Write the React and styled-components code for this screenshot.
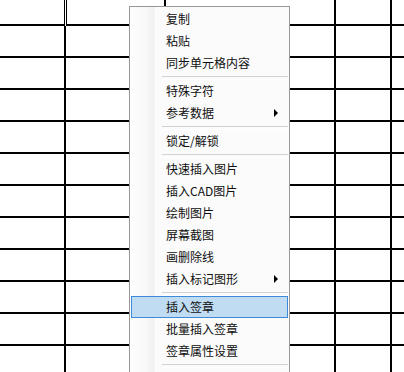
import React from 'react'
import styled, { createGlobalStyle } from 'styled-components'

const GlobalStyle = createGlobalStyle`
  html, body {
    margin: 0;
    padding: 0;
    background: #fff;
  }
  * {
    box-sizing: border-box;
  }
`;

const Page = styled.div`
  position: relative;
  width: 404px;
  height: 372px;
  overflow: hidden;
  background: #fff;
`;

const Sheet = styled.div`
  display: grid;
  grid-template-columns: 66px 100px 170px 56px 1fr;
  grid-template-rows: 26px repeat(11, 32px);
`;

const Cell = styled.div`
  position: relative;
  border-bottom: 2px solid #000;
  border-right: ${p => (p.$last ? 'none' : '2px solid #000')};
  background: #fff;

  ${p => p.$selected && `
    &::after {
      content: '';
      position: absolute;
      left: -2px;
      top: -3px;
      width: 103px;
      height: 30px;
      border: 1px solid #000;
      box-shadow: inset 0 0 0 1px #fff, inset 0 0 0 2px #000;
    }
  `}
`;

const Menu = styled.div`
  position: absolute;
  left: 129px;
  top: 6px;
  width: 161px;
  padding: 1px 0 20px;
  border: 1px solid #979797;
  background: linear-gradient(to right, #fdfdfd 0, #f8f8f8 16px, #efefef 24px, #fbfbfb 25px, #fbfbfb 100%);
  font-family: "Noto Sans CJK SC", "Noto Sans", sans-serif;
  font-size: 12px;
  color: #0f0f0f;
`;

const Item = styled.div`
  display: flex;
  align-items: center;
  height: 22px;
  line-height: 20px;
  margin: 0 1px;
  padding-left: 34px;
  border: 1px solid ${p => (p.$active ? '#3c8ad8' : 'transparent')};
  background: ${p => (p.$active ? '#c0dcf3' : 'transparent')};
  white-space: nowrap;
`;

const Arrow = styled.span`
  margin-left: auto;
  margin-right: 9px;
  width: 0;
  height: 0;
  border-left: 4px solid #000;
  border-top: 4px solid transparent;
  border-bottom: 4px solid transparent;
`;

const Separator = styled.div`
  height: 6px;
  padding-top: 2px;
  margin: 0 1px 0 32px;

  &::before {
    content: '';
    display: block;
    height: 2px;
    border-top: 1px solid #d2d2d2;
    border-bottom: 1px solid #ffffff;
  }
`;

const groups = [
  [{ label: '复制' }, { label: '粘贴' }, { label: '同步单元格内容' }],
  [{ label: '特殊字符' }, { label: '参考数据', sub: true }],
  [{ label: '锁定/解锁' }],
  [
    { label: '快速插入图片' },
    { label: '插入CAD图片' },
    { label: '绘制图片' },
    { label: '屏幕截图' },
    { label: '画删除线' },
    { label: '插入标记图形', sub: true },
  ],
  [{ label: '插入签章', active: true }, { label: '批量插入签章' }, { label: '签章属性设置' }],
];

export default function App() {
  const rows = 12;
  const cols = 5;
  const cells = [];
  for (let r = 0; r < rows; r++) {
    for (let c = 0; c < cols; c++) {
      cells.push(
        <Cell key={r + '-' + c} $last={c === cols - 1} $selected={r === 0 && c === 1} />
      );
    }
  }

  return (
    <Page>
      <GlobalStyle />
      <Sheet>{cells}</Sheet>
      <Menu>
        {groups.map((group, gi) => (
          <React.Fragment key={gi}>
            {gi > 0 && <Separator />}
            {group.map(item => (
              <Item key={item.label} $active={item.active}>
                {item.label}
                {item.sub && <Arrow />}
              </Item>
            ))}
          </React.Fragment>
        ))}
        <Separator />
      </Menu>
    </Page>
  )
}
